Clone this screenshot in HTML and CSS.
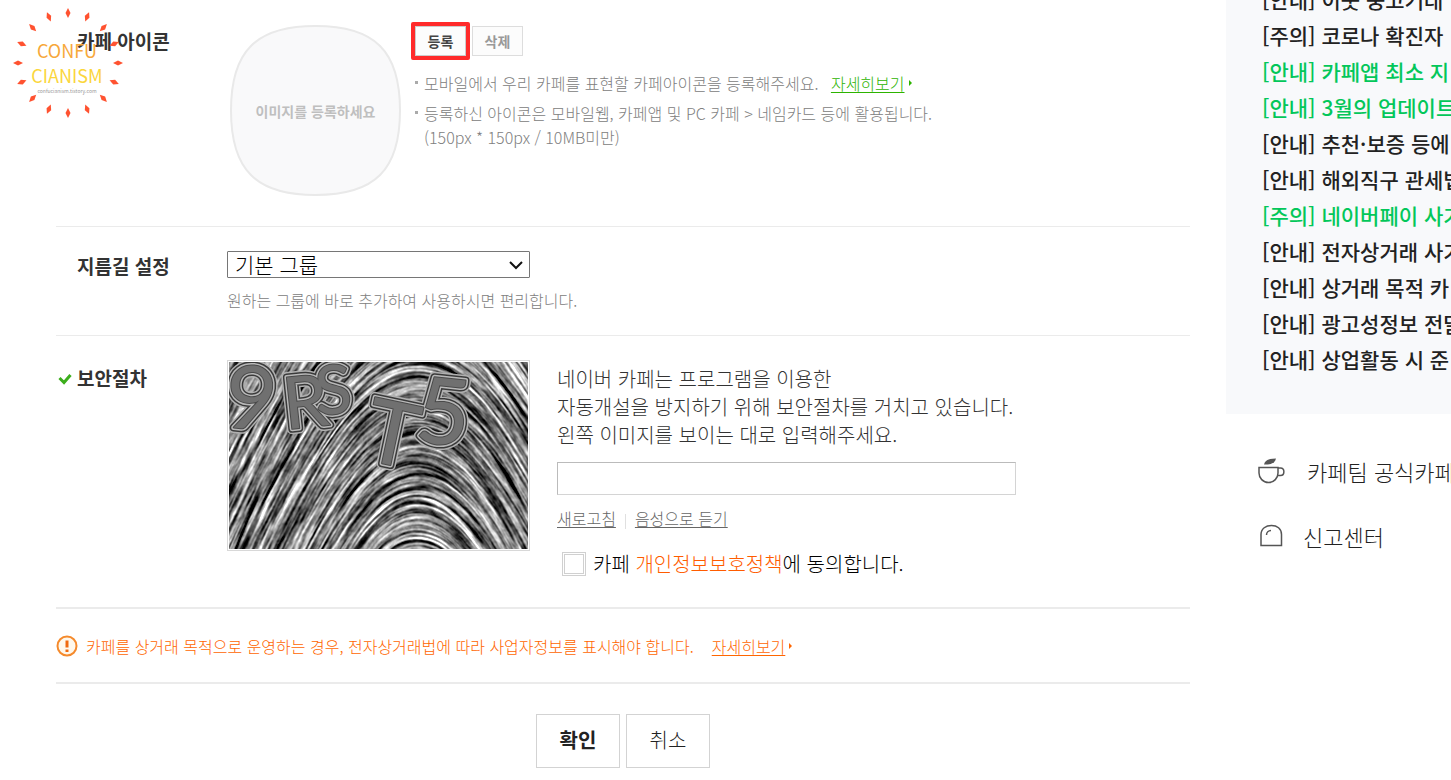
FILE: index.html
```html
<!DOCTYPE html>
<html lang="ko">

<head>
    <meta charset="UTF-8">
    <meta name="viewport" content="width=device-width, initial-scale=1.0">
    <title>카페 만들기</title>
    <link rel="stylesheet" href="styles.css">
</head>

<body>
    <div class="page">
        <main class="content">
            <form>
                <section class="row row-icon">
                    <h3 class="label">카페 아이콘</h3>
                    <div class="field icon-field">
                        <div class="icon-preview">
                            <svg class="icon-shape" viewBox="0 0 171 171" aria-hidden="true">
                                <path d="M85.500 1C145 1 170 26 170 85.500S145 170 85.500 170 1 145 1 85.500 26 1 85.500 1Z" />
                            </svg>
                            <span>이미지를 등록하세요</span>
                        </div>
                        <div class="icon-info">
                            <div class="icon-buttons">
                                <button type="button" class="btn-small btn-add">등록</button>
                                <button type="button" class="btn-small btn-del">삭제</button>
                            </div>
                            <ul class="help">
                                <li>모바일에서 우리 카페를 표현할 카페아이콘을 등록해주세요. <a href="#" class="more">자세히보기</a></li>
                                <li>등록하신 아이콘은 모바일웹, 카페앱 및 PC 카페 &gt; 네임카드 등에 활용됩니다.<br>(150px * 150px / 10MB미만)</li>
                            </ul>
                        </div>
                    </div>
                </section>

                <section class="row row-group">
                    <label class="label" for="group">지름길 설정</label>
                    <div class="field">
                        <div class="select">
                            <select id="group">
                                <option>기본 그룹</option>
                            </select>
                            <svg viewBox="0 0 14 10" aria-hidden="true">
                                <path d="M1 2 7 8 13 2" />
                            </svg>
                        </div>
                        <p class="hint">원하는 그룹에 바로 추가하여 사용하시면 편리합니다.</p>
                    </div>
                </section>

                <section class="row row-captcha">
                    <label class="label" for="captcha">
                        <svg class="check" viewBox="0 0 14 14" aria-hidden="true">
                            <path d="M1.500 6 6 10.500 12.500 3" />
                        </svg>보안절차</label>
                    <div class="field captcha-field">
                        <div class="captcha">
                            <canvas id="ridges" width="299" height="187"></canvas>
                            <svg class="letters" viewBox="0 0 299 187">
                                <defs>
                                    <g id="chars">
                                        <text x="-4" y="67" font-size="88" transform="rotate(6 20 40)">9</text>
                                        <text x="54" y="66" font-size="72" transform="rotate(-6 70 40)">R</text>
                                        <text x="86" y="52" font-size="68" transform="rotate(-4 102 30)">S</text>
                                        <text x="138" y="102" font-size="88" transform="rotate(12 160 70)">T</text>
                                        <text x="188" y="82" font-size="92" transform="rotate(6 212 50)">5</text>
                                    </g>
                                </defs>
                                <use href="#chars" class="ring ring1" />
                                <use href="#chars" class="ring ring2" />
                                <use href="#chars" class="ring ring3" />
                                <use href="#chars" class="ring ring4" />
                                <use href="#chars" class="ring ring5" />
                            </svg>
                        </div>
                        <div class="captcha-info">
                            <p>네이버 카페는 프로그램을 이용한<br>자동개설을 방지하기 위해 보안절차를 거치고 있습니다.<br>왼쪽 이미지를 보이는 대로 입력해주세요.</p>
                            <input type="text" id="captcha" class="captcha-input">
                            <div class="captcha-links">
                                <a href="#">새로고침</a>
                                <a href="#">음성으로 듣기</a>
                            </div>
                            <div class="agree">
                                <input type="checkbox" id="agree">
                                <label for="agree">카페 <a href="#">개인정보보호정책</a>에 동의합니다.</label>
                            </div>
                        </div>
                    </div>
                </section>

                <div class="notice">
                    <svg class="warn" viewBox="0 0 22 22" aria-hidden="true">
                        <circle cx="11" cy="11" r="9.500" />
                        <path d="M11 5.500v7M11 14.500v2.500" />
                    </svg>
                    <p>카페를 상거래 목적으로 운영하는 경우, 전자상거래법에 따라 사업자정보를 표시해야 합니다.</p>
                    <a href="#" class="more">자세히보기</a>
                </div>

                <div class="actions">
                    <button type="submit" class="btn ok">확인</button>
                    <button type="button" class="btn">취소</button>
                </div>
            </form>
        </main>

        <aside class="side">
            <ul class="news">
                <li><a href="#">[안내] 이웃 중고거래</a></li>
                <li><a href="#">[주의] 코로나 확진자</a></li>
                <li><a href="#" class="on">[안내] 카페앱 최소 지</a></li>
                <li><a href="#" class="on">[안내] 3월의 업데이트</a></li>
                <li><a href="#">[안내] 추천·보증 등에</a></li>
                <li><a href="#">[안내] 해외직구 관세법</a></li>
                <li><a href="#" class="on">[주의] 네이버페이 사기</a></li>
                <li><a href="#">[안내] 전자상거래 사기</a></li>
                <li><a href="#">[안내] 상거래 목적 카</a></li>
                <li><a href="#">[안내] 광고성정보 전달</a></li>
                <li><a href="#">[안내] 상업활동 시 준</a></li>
            </ul>
            <nav class="links">
                <a href="#" class="link-cafe">
                    <svg viewBox="0 0 28 28" aria-hidden="true">
                        <path class="line" d="M2 10.500H21V16C21 21 17 25.500 11.500 25.500S2 21 2 16ZM21 11H23.500C28 11 28 18.500 23.500 18.500H20.500" />
                        <path class="leaf" d="M7 7.500C8 3.500 11 1.500 19 1.500 18 6 14 8 7 7.500Z" />
                    </svg>카페팀 공식카페</a>
                <a href="#" class="link-report">
                    <svg viewBox="0 0 28 28" aria-hidden="true">
                        <path class="line" d="M4 23.500V12.500C4 6.500 9 3.500 14.500 3.500S24.500 6.500 24.500 12.500V23.500ZM9.500 13C9.500 10.500 11.500 8.500 14 8.500" />
                    </svg>신고센터</a>
            </nav>
        </aside>

        <svg class="watermark" viewBox="0 0 112 112">
            <defs>
                <path id="spark" d="M56 1 58.500 6 56 11 53.500 6Z" />
            </defs>
            <g id="sparks" class="sparks"></g>
            <text x="55" y="51" class="wm-top">CONFU</text>
            <text x="55" y="76" class="wm-mid">CIANISM</text>
            <text x="55" y="86" class="wm-url">confucianism.tistory.com</text>
        </svg>
    </div>
    <script src="script.js"></script>
</body>

</html>
```
FILE: styles.css
```css
* {
    box-sizing: border-box;
}

body {
    margin: 0;
    background: #fff;
    color: #222;
    font-family: "Noto Sans CJK KR", sans-serif;
    font-size: 16px;
    font-weight: 300;
}

h3,
p,
ul {
    margin: 0;
    padding: 0;
    font-weight: inherit;
}

ul {
    list-style: none;
}

a {
    color: inherit;
    text-decoration: none;
}

input,
select,
button {
    font-family: inherit;
}

.page {
    position: relative;
    display: flex;
    overflow: hidden;
}

.content {
    flex: 1;
    padding: 0 36px 12px 56px;
}

/* form rows */
.row {
    display: flex;
    border-bottom: 1px solid #ebebeb;
}

.label {
    position: relative;
    flex: 0 0 171px;
    padding-left: 21px;
    font-size: 19px;
    line-height: 32px;
    font-weight: 700;
    color: #333;
}

.field {
    flex: 1;
}

.row-icon {
    padding: 25px 0 30px;
}

.icon-field {
    display: flex;
    gap: 10px;
    padding-left: 3px;
}

.icon-preview {
    position: relative;
    display: flex;
    align-items: center;
    justify-content: center;
    width: 171px;
    height: 171px;
    font-size: 14px;
    font-weight: 700;
    color: #bfbfbf;
}

.icon-preview span {
    position: relative;
}

.icon-shape {
    position: absolute;
    inset: 0;
    fill: #f9f9fa;
    stroke: #e9e9e9;
    stroke-width: 2;
}

.icon-buttons {
    display: flex;
    align-items: center;
    gap: 2px;
    margin-top: -3px;
}

.btn-small {
    width: 51px;
    height: 30px;
    padding: 0;
    border: 1px solid #ddd;
    background: #fcfcfc;
    font-size: 14px;
    line-height: 20px;
    font-weight: 700;
    color: #999;
}

.btn-add {
    width: 59px;
    height: 38px;
    border: 4px solid #ff2a2a;
    border-radius: 2px;
    box-shadow: inset 0 0 0 1px #ccc;
    color: #444;
}

.help {
    padding: 11px 0 0 3px;
    line-height: 24px;
    color: #808080;
}

.help li {
    position: relative;
    padding-left: 10px;
    margin-bottom: 6px;
}

.help li::before {
    content: "";
    position: absolute;
    left: 1px;
    top: 10px;
    width: 3px;
    height: 3px;
    background: #aaa;
}

.more {
    display: inline-flex;
    align-items: center;
    text-decoration: underline;
    text-underline-offset: 2px;
}

.more::after {
    content: "";
    margin-left: 4px;
    border: 3px solid transparent;
    border-left-color: currentColor;
    border-right: 0;
}

.help .more {
    margin-left: 8px;
    color: #2db400;
}

.row-group {
    padding: 24px 0 22px;
}

.row-group .label {
    line-height: 30px;
}

.select {
    position: relative;
    width: 303px;
}

.select select {
    appearance: none;
    display: block;
    width: 100%;
    height: 27px;
    padding: 0 28px 2px 7px;
    border: 1px solid #767676;
    border-radius: 1px;
    background: #fff;
    font-size: 21px;
    line-height: 24px;
    font-weight: 300;
    color: #000;
}

.select svg {
    position: absolute;
    right: 7px;
    top: 9px;
    width: 14px;
    height: 10px;
    fill: none;
    stroke: #111;
    stroke-width: 2;
    pointer-events: none;
}

.hint {
    margin-top: 10px;
    padding-bottom: 1px;
    line-height: 24px;
    color: #808080;
}

.row-captcha {
    padding: 24px 0 29px;
    border-bottom-width: 2px;
}

.row-captcha .label {
    padding-top: 2px;
}

.check {
    position: absolute;
    left: 2px;
    top: 12px;
    width: 14px;
    height: 14px;
    fill: none;
    stroke: #3cae1c;
    stroke-width: 3;
}

.captcha-field {
    display: flex;
    align-items: flex-start;
    gap: 27px;
}

.captcha {
    position: relative;
    flex: none;
    padding: 1px;
    border: 1px solid #d8d8d8;
}

.captcha canvas {
    display: block;
}

.letters {
    position: absolute;
    left: 1px;
    top: 1px;
    width: 299px;
    height: 187px;
    font-family: Lato, sans-serif;
    font-weight: 400;
}

.ring {
    fill: none;
    stroke-linejoin: round;
}

.ring1 {
    stroke: #b0b0b0;
    stroke-width: 11;
}

.ring2 {
    stroke: #3a3a3a;
    stroke-width: 8;
}

.ring3 {
    stroke: #b8b8b8;
    stroke-width: 5;
}

.ring4 {
    stroke: #4a4a4a;
    stroke-width: 2;
}

.ring5 {
    fill: #707070;
}

.captcha-info {
    flex: 1;
    padding-top: 5px;
}

.captcha-info p {
    font-size: 20px;
    line-height: 28px;
    color: #333;
}

.captcha-input {
    display: block;
    width: 459px;
    height: 33px;
    margin-top: 13px;
    padding: 0 8px;
    border: 1px solid #d4d4d4;
    border-top-color: #bbb;
    border-left-color: #bbb;
    font-size: 16px;
}

.captcha-links {
    display: flex;
    align-items: center;
    margin-top: 11px;
    line-height: 24px;
    color: #666;
}

.captcha-links a {
    text-decoration: underline;
    text-underline-offset: 2px;
}

.captcha-links a + a::before {
    content: "";
    display: inline-block;
    width: 1px;
    height: 15px;
    margin: 0 9px;
    vertical-align: -4px;
    background: #e0e0e0;
}

.agree {
    display: flex;
    align-items: center;
    gap: 7px;
    margin-top: 20px;
    padding-left: 5px;
    font-size: 20px;
    line-height: 28px;
    color: #000;
}

.agree input {
    appearance: none;
    width: 24px;
    height: 24px;
    margin: 0;
    border: 3px double #d0d0d0;
    background: #fff;
}

.agree a {
    color: #ff5c00;
}

.notice {
    display: flex;
    align-items: center;
    height: 75px;
    border-bottom: 2px solid #ebebeb;
    line-height: 24px;
    color: #ff6600;
}

.notice .more {
    margin-left: 18px;
}

.warn {
    width: 22px;
    height: 22px;
    margin-right: 8px;
    fill: #fff8ec;
    stroke: #f58a2c;
    stroke-width: 2;
}

.warn path {
    stroke: #f06a10;
    stroke-width: 3;
}

.actions {
    display: flex;
    justify-content: center;
    gap: 6px;
    padding-top: 30px;
}

.btn {
    width: 84px;
    height: 54px;
    padding: 0 0 2px;
    border: 1px solid #d3d3d3;
    background: #fff;
    font-size: 20px;
    line-height: 28px;
    font-weight: 300;
    color: #222;
}

.ok {
    font-weight: 700;
}

/* right column */
.side {
    flex: 0 0 225px;
    overflow: hidden;
    white-space: nowrap;
}

.news {
    margin-top: -19px;
    padding: 0 0 37px 36px;
    background: #f8f9fb;
    font-size: 21px;
    line-height: 36px;
    font-weight: 500;
}

.news .on {
    color: #03c75a;
}

.links {
    display: flex;
    flex-direction: column;
    gap: 29px;
    padding: 39px 0 0 31px;
    font-size: 22px;
    line-height: 36px;
}

.links a {
    display: flex;
    align-items: center;
}

.links svg {
    flex: none;
    width: 28px;
    height: 28px;
}

.link-cafe {
    gap: 22px;
}

.link-report {
    gap: 18px;
}

.links .line {
    fill: none;
    stroke: #555;
    stroke-width: 1.5;
}

.links .leaf {
    fill: #555;
}

/* blog mark laid over the first row */
.watermark {
    position: absolute;
    left: 12px;
    top: 7px;
    width: 112px;
    height: 112px;
    pointer-events: none;
    text-anchor: middle;
    font-weight: 400;
}

.sparks {
    fill: #ff5230;
}

.wm-top {
    fill: #f7a83a;
    font-size: 18px;
}

.wm-mid {
    fill: #fbd63c;
    font-size: 18px;
}

.wm-url {
    fill: #999;
    font-size: 5px;
}
```
FILE: script.js
```js
// ring of diamonds
const sparks = document.getElementById("sparks");
for (let i = 0; i < 16; i++) {
    const use = document.createElementNS("http://www.w3.org/2000/svg", "use");
    use.setAttribute("href", "#spark");
    use.setAttribute("transform", `rotate(${i * 22.5} 56 56)`);
    sparks.appendChild(use);
}

// captcha background: noise smeared along arched flow lines
const canvas = document.getElementById("ridges");
const ctx = canvas.getContext("2d");
const W = canvas.width, H = canvas.height;
const CELL = 1.9;

let seed = 9;
function rnd() {
    seed = (seed * 1664525 + 1013904223) % 4294967296;
    return seed / 4294967296;
}

const NW = 280, NH = 240;
const noise = Array.from({ length: NW * NH }, rnd);

function sample(x, y) {
    const u = x / CELL + 40, v = y / CELL + 40;
    const i = Math.floor(u), j = Math.floor(v);
    const a = u - i, b = v - j;
    const n = (p, q) => noise[(q + NH) % NH * NW + (p + NW) % NW];
    return (n(i, j) * (1 - a) + n(i + 1, j) * a) * (1 - b)
        + (n(i, j + 1) * (1 - a) + n(i + 1, j + 1) * a) * b;
}

function slope(x, y) {
    const spread = 130 - 50 * Math.max(0, Math.min(1, y / H));
    return 2.2 * Math.tanh((x - 188) / spread);
}

const values = new Float32Array(W * H);
let sum = 0, sq = 0;
for (let y = 0; y < H; y++) {
    for (let x = 0; x < W; x++) {
        let total = sample(x, y);
        for (const dir of [-1, 1]) {
            let px = x, py = y;
            for (let s = 0; s < 26; s++) {
                const m = slope(px, py);
                const len = Math.hypot(1, m);
                px += dir / len;
                py += dir * m / len;
                total += sample(px, py);
            }
        }
        values[y * W + x] = total;
        sum += total;
        sq += total * total;
    }
}

const mean = sum / values.length;
const dev = Math.sqrt(sq / values.length - mean * mean);
const img = ctx.createImageData(W, H);
values.forEach((v, i) => {
    const g = 122 + (v - mean) / dev * 62;
    img.data[i * 4] = img.data[i * 4 + 1] = img.data[i * 4 + 2] = g;
    img.data[i * 4 + 3] = 255;
});
ctx.putImageData(img, 0, 0);
```
